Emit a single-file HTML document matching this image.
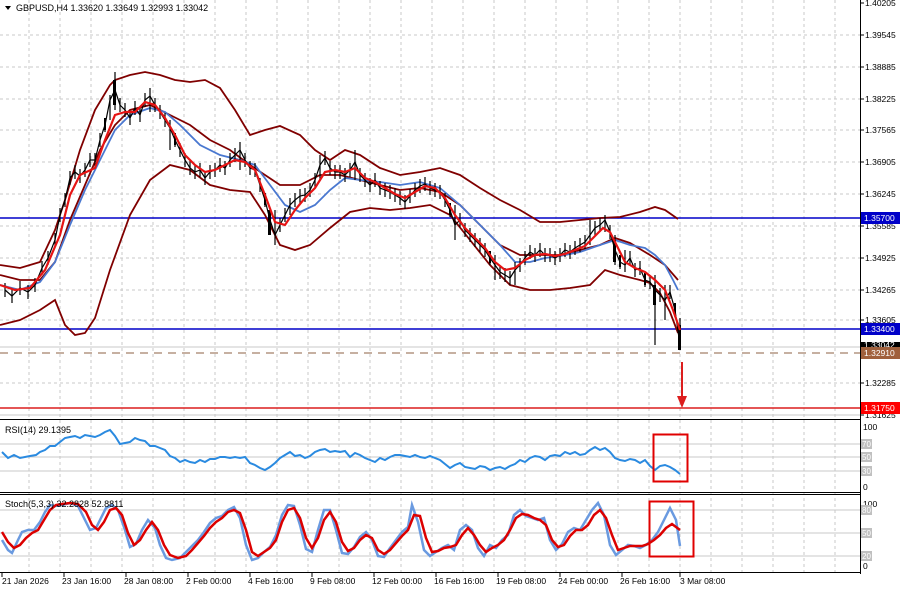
<!DOCTYPE html>
<html><head><meta charset="utf-8"><style>
html,body{margin:0;padding:0;background:#fff;}
svg{display:block;font-family:"Liberation Sans",sans-serif;}
</style></head><body>
<svg width="900" height="590" viewBox="0 0 900 590" xmlns="http://www.w3.org/2000/svg">
<rect width="900" height="590" fill="#fff"/>
<g stroke="#c8c8c8" stroke-dasharray="3,3" stroke-width="1">
<path d="M29 0V418M60 0V418M91 0V418M122 0V418M153 0V418M184 0V418M215 0V418M246 0V418M277 0V418M308 0V418M339 0V418M370 0V418M401 0V418M432 0V418M463 0V418M494 0V418M525 0V418M556 0V418M587 0V418M618 0V418M649 0V418M680 0V418M711 0V418M742 0V418M773 0V418M804 0V418M835 0V418"/>
<path d="M29 420V572M60 420V572M91 420V572M122 420V572M153 420V572M184 420V572M215 420V572M246 420V572M277 420V572M308 420V572M339 420V572M370 420V572M401 420V572M432 420V572M463 420V572M494 420V572M525 420V572M556 420V572M587 420V572M618 420V572M649 420V572M680 420V572M711 420V572M742 420V572M773 420V572M804 420V572M835 420V572"/>
<path d="M0 35H860M0 67H860M0 99H860M0 130H860M0 162H860M0 194H860M0 226H860M0 258H860M0 290H860M0 320H860M0 383H860"/>
</g>
<g stroke="#c8c8c8" stroke-width="1">
<path d="M0 347H860M0 415H860M0 444H860M0 457H860M0 471H860M0 510H860M0 533H860M0 556H860"/>
</g>
<g fill="none" stroke="#000" stroke-width="1">
<path d="M860.5 0V574"/>
<path d="M0 419.5H860M0 492.5H860M0 494.5H860M0 572.5H860"/>
</g>
<path d="M0 218H860" stroke="#0000c8" stroke-width="1.5"/>
<path d="M0 329H860" stroke="#0000c8" stroke-width="1.5"/>
<path d="M0 353H860" stroke="#b49682" stroke-width="1.5" stroke-dasharray="8,6"/>
<path d="M0 408H860" stroke="#dc1e1e" stroke-width="1.5"/>
<g fill="none" stroke="#800000" stroke-width="1.8">
<polyline points="0,265 20,268 40,262 55,230 65,200 80,150 95,110 110,85 115,80 130,75 145,72 160,75 175,80 190,82 205,80 220,88 235,110 250,135 265,130 280,126 300,135 315,150 330,160 345,150 360,155 380,168 400,175 420,172 440,168 460,175 480,188 500,200 520,210 540,222 560,222 580,220 600,218 620,217 640,212 655,207 665,210 678,219"/>
<polyline points="0,325 20,320 40,310 55,300 65,325 75,335 85,333 95,318 110,270 130,215 150,180 170,165 190,170 210,185 230,190 250,192 265,215 280,245 295,250 310,245 330,228 350,212 370,208 390,210 410,208 430,205 450,215 470,240 490,265 510,285 530,290 550,290 570,288 590,285 605,270 620,275 640,280 650,283 660,293 670,312 678,333"/>
<polyline points="0,275 20,280 40,280 55,262 70,220 85,185 100,150 115,125 130,110 150,105 170,115 190,125 210,140 230,150 250,165 265,175 280,185 300,185 320,175 340,175 360,180 380,185 400,190 420,188 440,192 460,205 480,225 500,245 520,255 540,255 560,255 580,250 600,245 615,238 630,243 650,255 665,265 678,280"/>
</g>
<polyline fill="none" stroke="#4a78d0" stroke-width="1.8" points="0,285 20,290 40,282 55,262 70,225 85,190 100,160 115,130 130,115 150,108 165,112 180,125 200,145 220,155 240,160 255,165 270,185 285,205 300,212 315,205 330,190 345,178 360,180 380,182 400,185 420,182 440,188 460,205 480,225 500,245 515,262 530,262 545,258 560,256 580,252 600,245 615,240 630,245 645,248 655,255 665,265 673,280 678,290"/>
<g stroke="#000" stroke-width="1.2">
<polyline fill="none" points="5,290 12,296 20,288 28,292 35,285 42,268 48,258 55,240 60,215 65,200 70,178 75,172 80,176 85,170 90,160 95,160 100,140 105,125 110,100 115,90 120,105 125,110 130,118 135,108 140,115 145,100 150,96 155,105 160,112 165,120 170,128 175,140 180,150 185,160 190,168 195,172 200,170 205,178 210,172 215,170 220,165 225,168 230,160 235,155 240,150 245,160 250,168 255,170 260,185 265,200 270,220 275,235 280,225 285,215 290,205 295,200 300,196 305,195 310,190 315,180 320,165 325,158 330,168 335,172 340,172 345,175 350,170 355,162 360,175 365,180 370,185 375,180 380,188 385,190 390,192 395,195 400,198 405,202 410,196 415,190 420,186 425,184 430,188 435,190 440,192 445,200 450,210 455,225 460,220 465,230 470,235 475,240 480,245 485,250 490,258 495,265 500,272 505,275 510,278 515,270 520,265 525,258 530,252 535,255 540,250 545,255 550,255 555,258 560,255 565,250 570,252 575,248 580,245 585,242 590,235 595,228 600,225 605,220 610,232 615,250 620,262 625,265 630,258 635,270 640,268 645,280 650,282 655,290 660,295 665,300 670,292 675,310 680,345"/>
<path d="M115 72V110M110 95V120M150 88V112M170 120V150M240 142V170M275 210V245M290 198V215M320 155V180M355 150V180M455 205V240M495 255V280M515 262V285M590 220V245M605 215V232M615 235V265M625 250V272M655 275V345M665 285V320M680 318V350"/>
<path d="M5 283V297M12 289V303M20 281V295M28 285V299M35 278V292M42 261V275M48 251V265M55 233V247M60 208V222M65 193V207M70 171V185M75 165V179M80 169V183M85 163V177M90 153V167M95 153V167M100 133V147M105 118V132M120 98V112M125 103V117M130 111V125M135 101V115M140 108V122M145 93V107M155 98V112M160 105V119M165 113V127M175 133V147M180 143V157M185 153V167M190 161V175M195 165V179M200 163V177M205 171V185M210 165V179M215 163V177M220 158V172M225 161V175M230 153V167M235 148V162M245 153V167M250 161V175M255 163V177M260 178V192M265 193V207M270 213V227M280 218V232M285 208V222M295 193V207M300 189V203M305 188V202M310 183V197M315 173V187M325 151V165M330 161V175M335 165V179M340 165V179M345 168V182M350 163V177M360 168V182M365 173V187M370 178V192M375 173V187M380 181V195M385 183V197M390 185V199M395 188V202M400 191V205M405 195V209M410 189V203M415 183V197M420 179V193M425 177V191M430 181V195M435 183V197M440 185V199M445 193V207M450 203V217M460 213V227M465 223V237M470 228V242M475 233V247M480 238V252M485 243V257M490 251V265M500 265V279M505 268V282M510 271V285M520 258V272M525 251V265M530 245V259M535 248V262M540 243V257M545 248V262M550 248V262M555 251V265M560 248V262M565 243V257M570 245V259M575 241V255M580 238V252M585 235V249M595 221V235M600 218V232M610 225V239M620 255V269M630 251V265M635 263V277M640 261V275M645 273V287M650 275V289M660 288V302M670 285V299M675 303V317"/>
</g>
<g fill="#000">
<rect x="113" y="80" width="3" height="25"/><rect x="268" y="210" width="3" height="25"/><rect x="613" y="240" width="3" height="22"/><rect x="678" y="325" width="3" height="25"/><rect x="653" y="285" width="3" height="20"/>
<rect x="104" y="118" width="2" height="12"/><rect x="174" y="133" width="2" height="12"/><rect x="264" y="193" width="2" height="12"/><rect x="449" y="203" width="2" height="12"/><rect x="489" y="251" width="2" height="12"/><rect x="619" y="255" width="2" height="12"/><rect x="644" y="273" width="2" height="12"/><rect x="674" y="303" width="2" height="12"/>
</g>
<polyline fill="none" stroke="#e61414" stroke-width="2.2" points="0,285 15,290 30,288 45,270 60,235 70,195 80,175 95,168 105,140 115,115 125,112 135,112 145,102 155,105 165,118 175,135 185,155 195,165 205,172 215,170 225,165 235,160 245,162 255,170 265,195 275,222 285,225 295,210 305,198 315,188 325,172 335,170 345,172 355,168 365,178 375,182 385,188 395,194 405,198 415,192 425,186 435,188 445,198 455,215 465,228 475,238 485,248 495,262 505,270 515,268 525,260 535,255 545,254 555,256 565,254 575,250 585,246 595,236 603,228 610,232 618,248 625,262 635,268 645,272 655,280 665,290 673,310 680,330"/>
<path d="M682 362V398" stroke="#dc1e1e" stroke-width="2"/>
<path d="M677 396L682 408L687 396Z" fill="#dc1e1e"/>
<polyline fill="none" stroke="#2a8ae0" stroke-width="2" points="2,452 8,458 14,455 20,458 30,456 36,455 40,452 45,450 50,446 55,446 60,442 65,438 70,437 75,436 80,438 85,435 90,436 95,437 100,435 105,432 110,430 115,436 120,444 125,443 130,442 135,438 140,440 145,441 150,446 155,446 160,448 165,450 170,456 175,458 180,462 185,460 190,462 195,463 200,460 205,462 210,459 215,459 220,457 225,457 230,458 235,457 240,458 245,457 250,463 255,465 260,468 265,470 270,467 275,463 280,458 285,455 290,452 295,456 300,455 305,458 310,456 315,452 320,450 325,449 330,452 335,451 340,452 345,451 350,457 355,453 360,455 365,458 370,460 375,462 380,458 385,460 390,457 395,455 400,455 405,456 410,457 415,455 420,457 425,458 430,456 435,458 440,460 445,464 450,468 455,465 460,463 465,467 470,468 475,469 480,466 485,467 490,470 495,468 500,467 505,469 510,466 515,464 520,460 525,462 530,458 535,456 540,457 545,460 550,456 555,455 560,456 565,452 570,454 575,452 580,455 585,454 590,450 595,447 600,450 605,448 610,452 615,458 620,460 625,461 630,459 635,460 640,463 645,460 650,466 655,470 660,466 665,465 670,467 675,470 680,474"/>
<polyline fill="none" stroke="#6a9ae0" stroke-width="2.5" points="2,540 8,550 12,553 18,540 22,532 28,530 34,530 40,522 45,512 50,505 55,506 62,505 70,503 78,506 85,520 90,530 96,528 100,520 106,508 112,505 118,510 125,530 130,547 136,544 142,530 148,520 155,528 160,545 166,558 172,560 180,558 186,552 192,546 198,540 204,532 210,523 216,518 222,516 228,510 234,507 240,518 246,545 252,560 258,558 264,552 270,547 276,535 282,515 288,505 294,506 300,525 306,549 312,552 318,530 324,510 330,510 336,530 342,553 348,554 354,547 360,537 366,532 372,540 378,556 384,557 390,548 396,540 402,532 408,527 412,505 418,522 424,550 430,556 436,552 442,548 448,545 454,550 460,530 466,525 472,530 478,548 484,556 490,545 496,548 502,540 508,535 514,515 520,510 526,516 532,518 538,520 544,518 550,540 556,550 562,544 568,532 574,528 580,530 586,520 592,510 598,503 604,515 610,545 616,555 622,550 628,545 634,546 640,548 646,545 652,540 658,532 664,520 670,508 676,520 680,546"/>
<polyline fill="none" stroke="#dc0000" stroke-width="2.5" points="2,532 8,542 14,548 20,545 26,538 32,533 38,530 44,520 50,510 56,505 62,504 70,503 78,504 86,512 92,525 98,530 104,522 110,510 116,508 122,515 128,533 134,545 140,540 146,530 152,522 158,530 164,545 170,555 178,558 186,556 192,550 198,543 204,536 210,528 216,522 222,518 228,512 234,510 240,513 246,530 252,552 258,556 264,552 270,548 276,540 282,522 288,510 294,508 300,518 306,538 312,548 318,538 324,520 330,512 336,522 342,542 348,551 354,548 360,540 366,535 372,538 378,550 384,554 390,550 396,543 402,536 408,530 414,515 420,516 426,538 432,552 438,551 444,548 450,547 456,545 462,535 468,528 474,535 480,545 486,552 492,548 498,545 504,540 510,530 516,518 522,514 528,515 534,518 540,520 546,525 552,540 558,547 564,545 570,536 576,530 582,530 588,525 594,515 600,510 606,518 612,535 618,550 624,548 630,546 636,546 642,546 648,544 654,540 660,535 666,528 672,524 680,530"/>
<rect x="653.5" y="434.5" width="34" height="47" fill="none" stroke="#e00000" stroke-width="2"/>
<rect x="649.5" y="501.5" width="44" height="55" fill="none" stroke="#e00000" stroke-width="2"/>
<path d="M5 6L11 6L8 10Z" fill="#000"/>
<text x="16" y="11" font-size="9" fill="#000">GBPUSD,H4  1.33620 1.33649 1.32993 1.33042</text>
<text x="5" y="433" font-size="9" fill="#000">RSI(14) 29.1395</text>
<text x="5" y="507" font-size="9" fill="#000">Stoch(5,3,3) 32.2828 52.8811</text>
<g font-size="8.5" fill="#000">
<path d="M860 3h4M860 35h4M860 67h4M860 99h4M860 130h4M860 162h4M860 194h4M860 226h4M860 258h4M860 290h4M860 320h4M860 383h4M860 415h4" stroke="#000"/>
<text x="865" y="6">1.40205</text><text x="865" y="38">1.39545</text><text x="865" y="70">1.38885</text><text x="865" y="102">1.38225</text><text x="865" y="133">1.37565</text><text x="865" y="165">1.36905</text><text x="865" y="197">1.36245</text><text x="865" y="229">1.35585</text><text x="865" y="261">1.34925</text><text x="865" y="293">1.34265</text><text x="865" y="323">1.33605</text><text x="865" y="386">1.32285</text><text x="865" y="418">1.31625</text>
</g>
<rect x="861" y="212" width="39" height="12" fill="#0000c8"/><text x="864" y="221" font-size="8.5" fill="#fff">1.35700</text>
<rect x="861" y="323" width="39" height="12" fill="#0000c8"/><text x="864" y="332" font-size="8.5" fill="#fff">1.33400</text>
<rect x="861" y="342" width="39" height="7" fill="#000"/><text x="864" y="348" font-size="8.5" fill="#fff">1.33042</text>
<rect x="861" y="347" width="39" height="12" fill="#a0603c"/><text x="864" y="356" font-size="8.5" fill="#fff">1.32910</text>
<rect x="861" y="402" width="39" height="12" fill="#ff0000"/><text x="864" y="411" font-size="8.5" fill="#fff">1.31750</text>
<g font-size="8.5" fill="#000">
<text x="863" y="430">100</text><text x="863" y="490">0</text>
<text x="863" y="507">100</text><text x="863" y="569">0</text>
</g>
<g font-size="8" fill="#fff">
<rect x="861" y="439" width="11" height="10" fill="#c0c0c0"/><text x="862" y="447">70</text>
<rect x="861" y="452" width="11" height="10" fill="#c0c0c0"/><text x="862" y="460">50</text>
<rect x="861" y="466" width="11" height="10" fill="#c0c0c0"/><text x="862" y="474">30</text>
<rect x="861" y="505" width="11" height="10" fill="#c0c0c0"/><text x="862" y="513">80</text>
<rect x="861" y="528" width="11" height="10" fill="#c0c0c0"/><text x="862" y="536">50</text>
<rect x="861" y="551" width="11" height="10" fill="#c0c0c0"/><text x="862" y="559">20</text>
</g>
<g stroke="#000"><path d="M2 573v4M64 573v4M126 573v4M188 573v4M250 573v4M312 573v4M374 573v4M436 573v4M498 573v4M560 573v4M622 573v4M680 573v4"/></g>
<g font-size="8.5" fill="#000">
<text x="2" y="584">21 Jan 2026</text><text x="62" y="584">23 Jan 16:00</text><text x="124" y="584">28 Jan 08:00</text><text x="186" y="584">2 Feb 00:00</text><text x="248" y="584">4 Feb 16:00</text><text x="310" y="584">9 Feb 08:00</text><text x="372" y="584">12 Feb 00:00</text><text x="434" y="584">16 Feb 16:00</text><text x="496" y="584">19 Feb 08:00</text><text x="558" y="584">24 Feb 00:00</text><text x="620" y="584">26 Feb 16:00</text><text x="680" y="584">3 Mar 08:00</text>
</g>
</svg>
</body></html>
